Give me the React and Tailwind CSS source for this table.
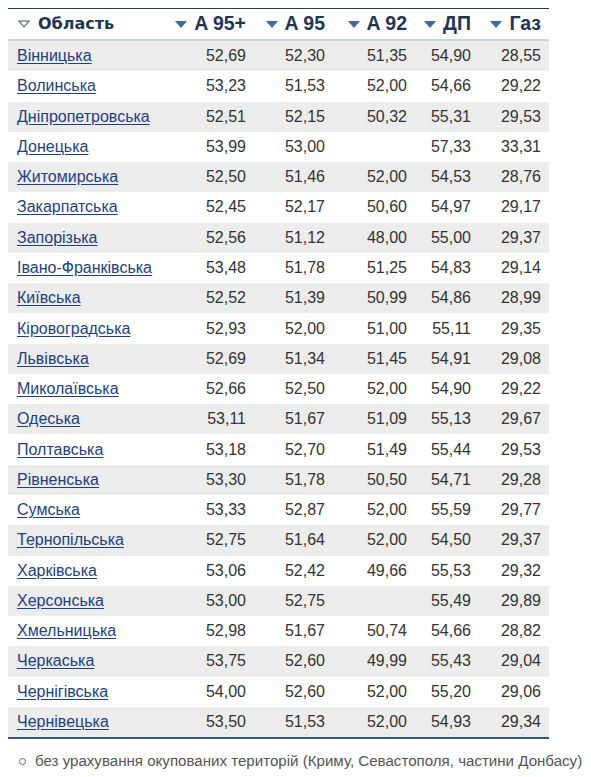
const rows = [
  ["Вінницька", "52,69", "52,30", "51,35", "54,90", "28,55"],
  ["Волинська", "53,23", "51,53", "52,00", "54,66", "29,22"],
  ["Дніпропетровська", "52,51", "52,15", "50,32", "55,31", "29,53"],
  ["Донецька", "53,99", "53,00", "", "57,33", "33,31"],
  ["Житомирська", "52,50", "51,46", "52,00", "54,53", "28,76"],
  ["Закарпатська", "52,45", "52,17", "50,60", "54,97", "29,17"],
  ["Запорізька", "52,56", "51,12", "48,00", "55,00", "29,37"],
  ["Івано-Франківська", "53,48", "51,78", "51,25", "54,83", "29,14"],
  ["Київська", "52,52", "51,39", "50,99", "54,86", "28,99"],
  ["Кіровоградська", "52,93", "52,00", "51,00", "55,11", "29,35"],
  ["Львівська", "52,69", "51,34", "51,45", "54,91", "29,08"],
  ["Миколаївська", "52,66", "52,50", "52,00", "54,90", "29,22"],
  ["Одеська", "53,11", "51,67", "51,09", "55,13", "29,67"],
  ["Полтавська", "53,18", "52,70", "51,49", "55,44", "29,53"],
  ["Рівненська", "53,30", "51,78", "50,50", "54,71", "29,28"],
  ["Сумська", "53,33", "52,87", "52,00", "55,59", "29,77"],
  ["Тернопільська", "52,75", "51,64", "52,00", "54,50", "29,37"],
  ["Харківська", "53,06", "52,42", "49,66", "55,53", "29,32"],
  ["Херсонська", "53,00", "52,75", "", "55,49", "29,89"],
  ["Хмельницька", "52,98", "51,67", "50,74", "54,66", "28,82"],
  ["Черкаська", "53,75", "52,60", "49,99", "55,43", "29,04"],
  ["Чернігівська", "54,00", "52,60", "52,00", "55,20", "29,06"],
  ["Чернівецька", "53,50", "51,53", "52,00", "54,93", "29,34"]
];

const cols = ["A 95+", "A 95", "A 92", "ДП", "Газ"];
const widths = ["w-[89px]", "w-[79px]", "w-[82px]", "w-[64px]", "w-[70px]"];

function Arrow() {
  return (
    <svg width="12" height="7" viewBox="0 0 12 7" className="mr-[7px] shrink-0">
      <polygon points="0,0 12,0 6,7" fill="#3d6a9c" />
    </svg>
  );
}

export default function App() {
  return (
    <div className="min-h-[777px] bg-white pt-2 font-['Liberation_Sans',Arial,sans-serif]">
      <div className="ml-2 w-[541px]">
        <div className="flex h-[33px] items-center border-t border-b-2 border-t-[#2b3a4a] border-b-[#c8d2dd] text-[19.5px] font-bold text-[#233556]">
          <div className="flex flex-1 items-center pl-[10px]">
            <svg width="12" height="8" viewBox="0 0 12 8" className="mr-[8px] shrink-0">
              <polygon points="1,1 11,1 6,7" fill="none" stroke="#7a8594" strokeWidth="1.4" />
            </svg>
            <span className="font-['DejaVu_Sans',sans-serif] text-[16px]">Область</span>
          </div>
          {cols.map((c, i) => (
            <div key={c} className={`${widths[i]} flex items-center justify-end pr-[8px]`}>
              <Arrow />
              {c}
            </div>
          ))}
        </div>
        <div className="border-b-2 border-[#3a5570]">
          {rows.map((r, idx) => (
            <div
              key={r[0]}
              className={`flex h-[30.27px] items-center text-[16px] text-[#333] ${idx % 2 === 0 ? "bg-[#ececec]" : "bg-white"}`}
            >
              <div className="flex-1 pl-[9px]">
                <a href="#" className="text-[#1d3f86] underline underline-offset-[2px]">{r[0]}</a>
              </div>
              {r.slice(1).map((v, i) => (
                <div key={i} className={`${widths[i]} pr-[8px] text-right`}>{v}</div>
              ))}
            </div>
          ))}
        </div>
      </div>
      <div className="mt-[11px] flex items-center pl-[19px] text-[15.1px] text-[#555]">
        <span className="mr-[9px] inline-block h-[7px] w-[7px] rounded-full border border-[#666]" />
        без урахування окупованих територій (Криму, Севастополя, частини Донбасу)
      </div>
    </div>
  );
}
